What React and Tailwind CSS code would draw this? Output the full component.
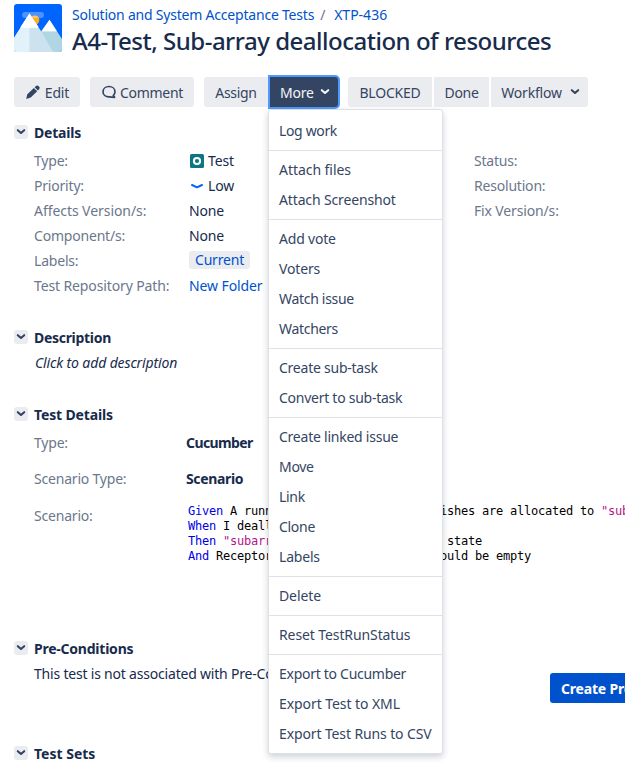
import React from "react";

const menuGroups = [
  [["Log work", "tracking-[-0.35px]"]],
  [["Attach files", "tracking-[-0.05px]"], ["Attach Screenshot", "tracking-[-0.14px]"]],
  [["Add vote", "tracking-[-0.2px]"], ["Voters", "tracking-[-0.15px]"], ["Watch issue", "tracking-[-0.3px]"], ["Watchers", "tracking-[-0.3px]"]],
  [["Create sub-task", "tracking-[-0.24px]"], ["Convert to sub-task", "tracking-[-0.26px]"]],
  [["Create linked issue", "tracking-[-0.24px]"], ["Move", "tracking-[-0.3px]"], ["Link", "tracking-[-0.3px]"], ["Clone", "tracking-[-0.3px]"], ["Labels", "tracking-[-0.2px]"]],
  [["Delete", "tracking-[-0.1px]"]],
  [["Reset TestRunStatus", "tracking-[-0.1px]"]],
  [["Export to Cucumber", "tracking-[-0.28px]"], ["Export Test to XML", "tracking-[-0.07px]"], ["Export Test Runs to CSV", "tracking-[-0.12px]"]],
];

function Chevron({ className = "" }) {
  return (
    <svg viewBox="0 0 10 8" className={`h-2 w-2.5 shrink-0 ${className}`} fill="none">
      <path d="M1.800 2.200 L5 5 L8.200 2.200" stroke="currentColor" strokeWidth="2.100" strokeLinecap="round" strokeLinejoin="round" />
    </svg>
  );
}

function ProjectAvatar() {
  return (
    <svg viewBox="0 0 48 48" className="h-12 w-12 shrink-0 rounded-[3px]">
      <rect width="48" height="48" fill="#0065ff" />
      <circle cx="20.800" cy="16" r="4.600" fill="#ffab1a" />
      <rect x="8" y="8" width="22" height="6" rx="3" fill="#fff" fillOpacity=".3" />
      <path d="M35.500 16 L48 35 V48 H20 L27 27.500 Z" fill="#b0d6e4" />
      <path d="M15.500 9.500 L27.600 28 L39 48 H0 V34 Z" fill="#cce3ef" />
      <path d="M15.500 9.500 V48 H0 V34 Z" fill="#e1f2fa" />
      <path d="M15.500 9.500 L24.500 23 Q23 25 21.500 23.500 Q20 25 18.500 23.500 Q17 25 15.500 23.500 Q14 25 12.500 23.500 Q11 25 9.500 23.500 Q8 24.500 6.500 23 Z" fill="#fff" />
      <path d="M35.500 15.800 L42.800 27 Q41.500 28 40 27 Q38.500 28 37 27 Q35.500 28 34 27 Q32.500 28 31 27 Q29 28 27.700 27 Z" fill="#fff" />
    </svg>
  );
}

function SectionHead({ title, className = "" }) {
  return (
    <h2 className="flex h-5 items-center">
      <span className="mr-1.5 -mt-0.5 flex h-3.5 w-3.5 items-center justify-center rounded-[3px] bg-[#ebecf0] text-[#344563]">
        <Chevron />
      </span>
      <span className={`font-bold ${className}`}>{title}</span>
    </h2>
  );
}

function Row({ label, children, labelClass = "", className = "h-[25px]", col = "w-[155px]" }) {
  return (
    <div className={`flex items-center ${className}`}>
      <span className={`${col} shrink-0 text-[#6b778c] ${labelClass}`}>{label}</span>
      {children}
    </div>
  );
}

function Button({ children, className = "" }) {
  return <button className={`flex h-[30px] shrink-0 items-center justify-center bg-[#ebecf0] pt-0.5 text-[#344563] ${className}`}>{children}</button>;
}

function MoreMenu() {
  return (
    <div className="absolute top-[32px] left-0 z-10 w-[175px] rounded-[3px] border border-[#dfe1e6] bg-white pt-0.5 text-left text-[#344563] shadow-[0_3px_6px_rgba(9,30,66,0.2)]">
      {menuGroups.map((group, i) => (
        <ul key={i} className={i ? "border-t border-[#dfe1e6] py-1" : "py-1"}>
          {group.map(([name, tracking]) => (
            <li key={name} className={`flex h-[30px] items-center pl-2.5 ${tracking}`}>{name}</li>
          ))}
        </ul>
      ))}
    </div>
  );
}

function K({ children }) {
  return <span className="text-[#0000e6]">{children}</span>;
}

function S({ children }) {
  return <span className="text-[#b5168c]">{children}</span>;
}

export default function App() {
  return (
    <div className="h-[780px] w-[625px] overflow-hidden bg-white px-3.5 pt-1 font-['Noto_Sans',sans-serif] text-[14px] leading-5 tracking-[-0.2px] whitespace-nowrap text-[#172b4d]">
      <header className="flex h-[73px] gap-2.5">
        <ProjectAvatar />
        <div>
          <div className="flex h-[21px] items-center pt-px text-[#0052cc]">
            <span className="tracking-[-0.21px]">Solution and System Acceptance Tests</span>
            <span className="ml-[6px] text-[#6b778c]">/</span>
            <span className="ml-[9px] tracking-[0px]">XTP-436</span>
          </div>
          <h1 className="text-[24px] leading-[32px] font-medium tracking-[-0.49px]">A4-Test, Sub-array deallocation of resources</h1>
        </div>
      </header>

      <nav className="flex h-[46px] items-start">
        <Button className="w-[66px] gap-1 rounded-[3px]">
          <svg viewBox="0 0 16 16" className="-mt-0.5 h-4 w-4" fill="currentColor">
            <path d="M1.200 14.900 L2.300 10.300 L8.900 3.900 L12.200 7.200 L5.700 13.600 Z M9.600 3.200 L11.300 1.700 Q12.400 1 13.400 2 L14.200 2.800 Q15.200 3.900 14.300 5 L12.900 6.500 Z" />
          </svg>
          Edit
        </Button>
        <Button className="ml-2.5 w-[104px] gap-[3px] rounded-[3px] tracking-[-0.3px]">
          <svg viewBox="0 0 16 16" className="-mt-0.5 h-4 w-4" fill="none" stroke="currentColor" strokeWidth="1.700" strokeLinejoin="round">
            <path d="M8 2.500 C4.500 2.500 2 4.800 2 7.700 C2 10.700 4.500 12.900 8 12.900 L13.600 13.300 L12.300 11.400 C13.500 10.400 14 9.200 14 7.700 C14 4.800 11.500 2.500 8 2.500 Z" />
          </svg>
          Comment
        </Button>
        <Button className="ml-2.5 w-16 rounded-l-[3px] tracking-[-0.3px]">Assign</Button>
        <div className="relative">
          <button className="-mt-0.5 flex h-[34px] w-[72px] items-center justify-between rounded-r-[5px] border-2 border-[#4c9aff] bg-[#344563] pt-0.5 pr-2 pl-2.5 text-[#f4f5f7]">
            More
            <Chevron className="-mt-0.5" />
          </button>
          <MoreMenu />
        </div>
        <Button className="ml-2 w-[84px] rounded-l-[3px]">BLOCKED</Button>
        <Button className="ml-0.5 w-[55px] tracking-[-0.3px]">Done</Button>
        <Button className="ml-0.5 w-[97px] gap-2 rounded-r-[3px] pl-0.5">
          Workflow
          <Chevron className="-mt-0.5" />
        </Button>
      </nav>

      <section className="h-[205px]">
        <SectionHead title="Details" />
        <div className="flex pt-[5px] pl-5">
          <div className="w-[440px] shrink-0">
            <Row label="Type:">
              <svg viewBox="0 0 14 14" className="mr-1 ml-px h-3.5 w-3.5">
                <rect width="14" height="14" rx="1.500" fill="#0f7681" />
                <circle cx="7" cy="7" r="3.100" fill="none" stroke="#fff" strokeWidth="2" />
              </svg>
              <span className="tracking-[-0.1px]">Test</span>
            </Row>
            <Row label="Priority:">
              <svg viewBox="0 0 16 16" className="mr-[3px] h-4 w-4" fill="none">
                <path d="M3 7 L8 9.400 L13 7" stroke="#0065ff" strokeWidth="2" strokeLinecap="round" strokeLinejoin="round" />
              </svg>
              Low
            </Row>
            <Row label="Affects Version/s:" labelClass="tracking-[-0.06px]">None</Row>
            <Row label="Component/s:">None</Row>
            <Row label="Labels:">
              <span className="-mt-0.5 flex h-[18px] w-[61px] items-center justify-center rounded-[3px] bg-[#ebecf0] text-[#0052cc]">Current</span>
            </Row>
            <Row label="Test Repository Path:" labelClass="tracking-[-0.12px]"><span className="tracking-[-0.1px] text-[#0052cc]">New Folder</span></Row>
          </div>
          <div>
            <Row label="Status:" />
            <Row label="Resolution:" />
            <Row label="Fix Version/s:" labelClass="tracking-[-0.15px]" />
          </div>
        </div>
      </section>

      <section className="h-[77px]">
        <SectionHead title="Description" className="tracking-[-0.3px]" />
        <p className="pt-[5px] pl-[21px] tracking-[-0.13px] italic">Click to add description</p>
      </section>

      <section className="h-[234px]">
        <SectionHead title="Test Details" className="tracking-[-0.14px]" />
        <div className="pl-5">
          <Row label="Type:" col="w-[152px]" className="h-9"><b className="tracking-[-0.6px]">Cucumber</b></Row>
          <Row label="Scenario Type:" col="w-[152px]" className="h-9"><b className="tracking-[-0.35px]">Scenario</b></Row>
          <div className="flex pt-[9px]">
            <span className="w-[154px] shrink-0 text-[#6b778c]">Scenario:</span>
            <pre className="-mt-0.5 font-['DejaVu_Sans_Mono',monospace] text-[12px] leading-[15px] tracking-[-0.224px] text-black">
              <K>Given</K>{" A running telescope with all dishes are allocated to "}<S>"subarray 1"</S>{"\n"}
              <K>When</K>{" I deallocate the resources\n"}
              <K>Then</K>{" "}<S>"subarray 1"</S>{" should go to the   state\n"}
              <K>And</K>{" ReceptorList for the subarray should be empty"}
            </pre>
          </div>
        </div>
      </section>

      <section className="h-[105px]">
        <SectionHead title="Pre-Conditions" className="tracking-[-0.23px]" />
        <div className="flex pt-[5px] pl-5">
          <p className="w-[516px] shrink-0">This test is not associated with Pre-Conditions.</p>
          <button className="mt-[9px] h-[30px] w-[185px] shrink-0 rounded-[3px] bg-[#0052cc] pt-0.5 pl-[11px] text-left font-bold text-white">Create Pre-Condition</button>
        </div>
      </section>

      <SectionHead title="Test Sets" className="tracking-[0px]" />
    </div>
  );
}
